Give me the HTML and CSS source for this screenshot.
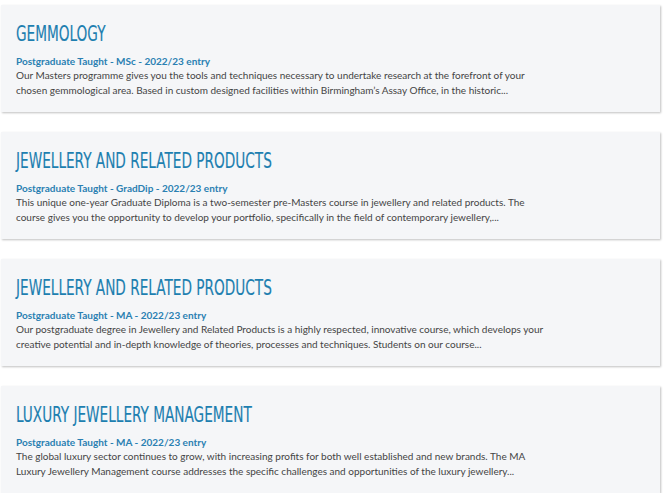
FILE: index.html
```html
<!DOCTYPE html>
<html lang="en">
<head>
<meta charset="utf-8">
<title>Courses</title>
<link rel="stylesheet" href="styles.css">
</head>
<body>
<div class="list">
  <div class="card">
    <h2 class="title"><span>GEMMOLOGY</span></h2>
    <p class="meta">Postgraduate Taught - MSc - 2022/23 entry</p>
    <p class="desc">Our Masters programme gives you the tools and techniques necessary to undertake research at the forefront of your chosen gemmological area. Based in custom designed facilities within Birmingham’s Assay Office, in the historic...</p>
  </div>
  <div class="card">
    <h2 class="title"><span>JEWELLERY AND RELATED PRODUCTS</span></h2>
    <p class="meta">Postgraduate Taught - GradDip - 2022/23 entry</p>
    <p class="desc">This unique one-year Graduate Diploma is a two-semester pre-Masters course in jewellery and related products. The course gives you the opportunity to develop your portfolio, specifically in the field of contemporary jewellery,...</p>
  </div>
  <div class="card">
    <h2 class="title"><span>JEWELLERY AND RELATED PRODUCTS</span></h2>
    <p class="meta">Postgraduate Taught - MA - 2022/23 entry</p>
    <p class="desc">Our postgraduate degree in Jewellery and Related Products is a highly respected, innovative course, which develops your creative potential and in-depth knowledge of theories, processes and techniques. Students on our course...</p>
  </div>
  <div class="card">
    <h2 class="title"><span>LUXURY JEWELLERY MANAGEMENT</span></h2>
    <p class="meta">Postgraduate Taught - MA - 2022/23 entry</p>
    <p class="desc">The global luxury sector continues to grow, with increasing profits for both well established and new brands. The MA Luxury Jewellery Management course addresses the specific challenges and opportunities of the luxury jewellery...</p>
  </div>
</div>
</body>
</html>
```

FILE: styles.css
```css
html, body {
  margin: 0;
  padding: 0;
  background: #ffffff;
}
body {
  font-family: Lato, "Open Sans", sans-serif;
}
.list {
  display: flex;
  flex-direction: column;
  gap: 20px;
  padding: 5px 7px 0 1px;
}
.card {
  height: 107px;
  box-sizing: border-box;
  background: #f5f6f8;
  box-shadow: 1px 1px 2px rgba(0, 0, 0, 0.25);
  padding: 16px 15px 0 15px;
}
.title {
  margin: 0;
  font-family: "Liberation Sans Narrow", "DejaVu Sans Condensed", sans-serif;
  font-weight: normal;
  font-size: 22px;
  line-height: 26px;
  color: #1d7fb0;
  white-space: nowrap;
  -webkit-text-stroke: 0.15px #1d7fb0;
}
.title span {
  display: inline-block;
  transform: scaleX(0.69);
  transform-origin: left center;
}
.meta {
  margin: 7px 0 0 0;
  font-size: 10px;
  line-height: 14px;
  font-weight: bold;
  color: #2a80b2;
}
.desc {
  margin: 0;
  width: 540px;
  font-size: 10px;
  line-height: 15px;
  color: #444444;
}
```
